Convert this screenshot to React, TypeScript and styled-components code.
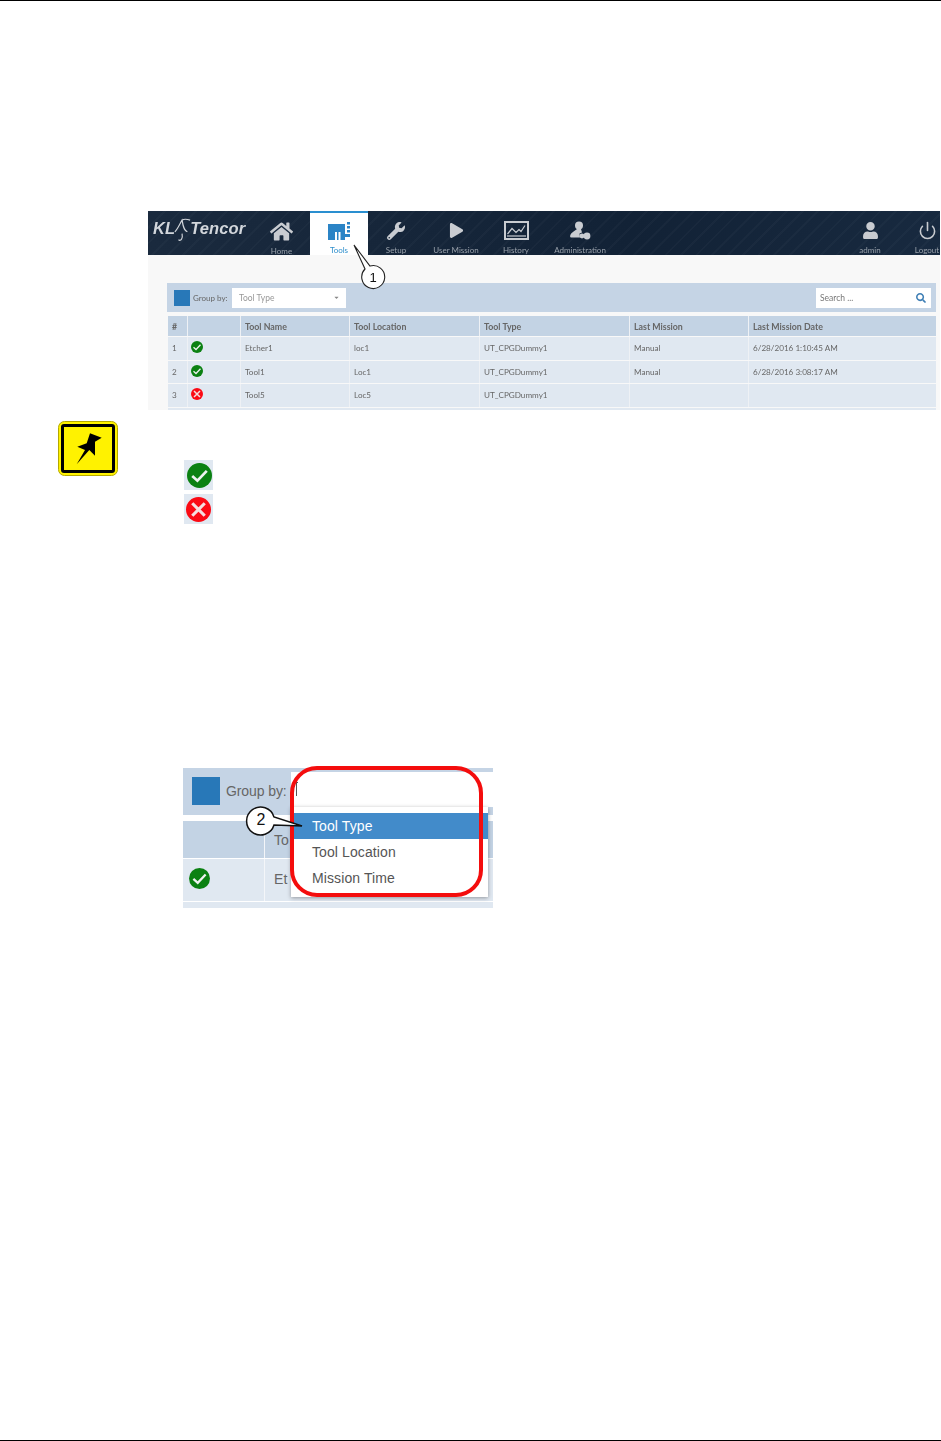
import styled, { createGlobalStyle } from "styled-components";
import { FaHome, FaWrench, FaPlay, FaUser, FaSearch, FaCaretDown } from "react-icons/fa";
import { FiPower } from "react-icons/fi";

const GlobalStyle = createGlobalStyle`
  html, body {
    margin: 0;
    background: #fff;
    overflow: hidden;
  }
`;

const Page = styled.div`
  box-sizing: border-box;
  height: 1441px;
  display: flex;
  flex-direction: column;
  border-top: 1px solid #000;
  border-bottom: 1px solid #000;
  padding-top: 210px;
  overflow: hidden;
`;

const Shot = styled.div`
  position: relative;
  width: 792px;
  height: 199px;
  margin-left: 148px;
  overflow: hidden;
  background: #f8f8f8;
  font-family: Lato, "Liberation Sans", sans-serif;
  filter: blur(0.45px);
`;

const NavBar = styled.div`
  display: flex;
  height: 44px;
  margin-right: -16px;
  color: #c6cad0;
  background-color: #15263a;
  background-image:
    repeating-linear-gradient(135deg, rgba(255, 255, 255, 0.025) 0 2px, transparent 2px 11px),
    linear-gradient(90deg, #1a2a3e, #122236 60%, #182a40);
`;

const Logo = styled.div`
  width: 105px;
  flex: none;
  display: flex;
  align-items: center;
  padding: 0 0 9px 5px;
  box-sizing: border-box;
  font: italic 700 16.5px "Liberation Sans", sans-serif;
  letter-spacing: 0.1px;
  color: #d2d6db;
`;

const Swoosh = styled.svg`
  width: 17px;
  height: 26px;
  margin: 3px -1px 0 -1px;
  flex: none;
`;

const NavItem = styled.div<{ $width: number; $active?: boolean }>`
  width: ${(p) => p.$width}px;
  flex: none;
  box-sizing: border-box;
  display: flex;
  flex-direction: column;
  align-items: center;
  padding-top: ${(p) => (p.$active ? 7 : 9)}px;
  font-size: 8px;
  color: ${(p) => (p.$active ? "#2f8fcc" : "#98a0aa")};
  background: ${(p) => (p.$active ? "#fff" : "transparent")};
  border-top: ${(p) => (p.$active ? "2px solid #2a8fd0" : "none")};
`;

const NavIcon = styled.div`
  height: 22px;
  display: flex;
  align-items: center;
  justify-content: center;
  color: #c9ccd1;
  margin-bottom: 4px;
`;

const NavSpacer = styled.div`
  flex: 1;
`;

const Content = styled.div`
  padding: 28px 4px 0 19px;
`;

const ToolBar = styled.div`
  height: 29px;
  display: flex;
  align-items: center;
  background: #c5d4e5;
  padding: 0 5px 0 7px;
  font-size: 8px;
  color: #666;
  margin-bottom: 4px;
`;

const BlueSquare = styled.div<{ $size: number }>`
  width: ${(p) => p.$size}px;
  height: ${(p) => p.$size}px;
  flex: none;
  background: #2878b8;
`;

const GroupLabel = styled.span`
  width: 39px;
  flex: none;
  margin-left: 3px;
`;

const SelectBox = styled.div`
  width: 114px;
  height: 20px;
  box-sizing: border-box;
  display: flex;
  align-items: center;
  justify-content: space-between;
  padding: 0 6px 0 7px;
  background: #fff;
  color: #999;
  font-size: 8.5px;
`;

const SearchBox = styled(SelectBox)`
  margin-left: auto;
  width: 115px;
  color: #777;
  padding: 0 5px 0 4px;
`;

const Row = styled.div<{ $head?: boolean }>`
  display: grid;
  grid-template-columns: 19px 53px 109px 130px 150px 119px 1fr;
  height: ${(p) => (p.$head ? 20 : 22.5)}px;
  margin-bottom: 1px;
  margin-left: 1px;
  background: ${(p) => (p.$head ? "#c3d3e4" : "#e0e8f1")};
  font-size: ${(p) => (p.$head ? 8.8 : 8.15)}px;
  font-weight: ${(p) => (p.$head ? 700 : 400)};
  color: #666;
`;

const Cell = styled.div`
  display: flex;
  align-items: center;
  padding-left: 4px;
  border-left: 1px solid #eef1f5;
  white-space: nowrap;
  overflow: hidden;

  &:first-child {
    border-left: none;
  }
`;

const IconCell = styled(Cell)`
  padding-left: 3px;
  padding-bottom: 2px;
`;

const Callout = styled.svg<{ $left: number; $top: number }>`
  position: absolute;
  left: ${(p) => p.$left}px;
  top: ${(p) => p.$top}px;
  overflow: visible;
`;

const NoteRow = styled.div`
  display: flex;
  margin: 11px 0 0 58px;
`;

const StatusList = styled.div`
  display: flex;
  flex-direction: column;
  gap: 4px;
  margin: 39px 0 0 66px;
`;

const StatusTile = styled.div<{ $shift: number }>`
  width: 29px;
  height: 30px;
  display: flex;
  align-items: center;
  justify-content: center;
  padding-left: ${(p) => p.$shift}px;
  box-sizing: border-box;
  background: #e0e8f1;
`;

const Crop = styled.div`
  position: relative;
  width: 310px;
  height: 139px;
  margin: 244px 0 0 183px;
  font-family: "Liberation Sans", Arial, sans-serif;
  font-size: 14px;
  letter-spacing: 0.1px;
  color: #666;
`;

const CropBar = styled.div`
  height: 47px;
  box-sizing: border-box;
  display: flex;
  align-items: center;
  padding: 0 0 1px 9px;
  background: #c5d4e5;
  margin-bottom: 6px;
`;

const CropLabel = styled.span`
  margin: 0 0 1px 6px;
  letter-spacing: -0.1px;
`;

const CropInput = styled.div`
  position: absolute;
  left: 108px;
  right: 0;
  top: 4px;
  height: 35px;
  background: #fff;
`;

const Caret = styled.div`
  position: absolute;
  left: 5px;
  top: 10px;
  width: 2px;
  height: 14px;
  border-left: 1px solid #555;
  border-top: 1px solid #555;
  box-sizing: border-box;
`;

const CropRow = styled.div<{ $head?: boolean; $height: number }>`
  display: grid;
  grid-template-columns: 81px 1fr;
  height: ${(p) => p.$height}px;
  margin-bottom: 1px;
  background: ${(p) => (p.$head ? "#c3d3e4" : "#e0e8f1")};
`;

const CropCell = styled.div<{ $lift?: boolean }>`
  display: flex;
  align-items: center;
  padding: 0 0 ${(p) => (p.$lift ? 3 : 0)}px 9px;
  border-left: 1px solid #f4f6f9;

  &:first-child {
    border-left: none;
    padding-left: 6px;
  }
`;

const Dropdown = styled.div`
  position: absolute;
  left: 108px;
  top: 39px;
  width: 197px;
  height: 90px;
  box-sizing: border-box;
  padding-top: 6px;
  background: #fff;
  box-shadow: 0 1px 4px rgba(0, 0, 0, 0.35);
`;

const Option = styled.div<{ $selected?: boolean }>`
  height: 26px;
  display: flex;
  align-items: center;
  padding-left: 21px;
  color: ${(p) => (p.$selected ? "#fff" : "#555")};
  background: ${(p) => (p.$selected ? "#428bca" : "transparent")};
`;

const Highlight = styled.div`
  position: absolute;
  left: 107px;
  top: -2px;
  width: 193px;
  height: 131px;
  box-sizing: border-box;
  border: 4px solid #f40d0d;
  border-radius: 27px;
`;

function StatusIcon({ ok, size }: { ok: boolean; size: number }) {
  return (
    <svg width={size} height={size} viewBox="0 0 24 24">
      <circle cx="12" cy="12" r="12" fill={ok ? "#0b8112" : "#fb0a14"} />
      {ok ? (
        <path d="M5 12.5 10 17 19 7.5" fill="none" stroke="#eef2f0" strokeWidth="2.6" />
      ) : (
        <path d="M6 6 18 18M18 6 6 18" fill="none" stroke="#f4dede" strokeWidth="3" />
      )}
    </svg>
  );
}

function ToolsIcon() {
  return (
    <svg width="22" height="18" viewBox="0 0 22 18" fill="#2b84c6">
      <path d="M0 2h17v16H0z" />
      <path d="M7 10h2v8H7zM10.500 10h2v8h-2z" fill="#fff" />
      <rect x="19" y="0" width="3" height="2.5" />
      <rect x="19" y="4" width="3" height="2.5" />
      <rect x="19" y="8" width="3" height="2.5" />
      <path d="M17 12h5v3h-5z" />
    </svg>
  );
}

function HistoryIcon() {
  return (
    <svg width="25" height="19" viewBox="0 0 25 19" fill="none" stroke="#c9ccd1">
      <rect x="1" y="1" width="23" height="17" strokeWidth="2" />
      <path d="M3.5 13 8 7.5l4 4 3-3 2 2 4-6" strokeWidth="1.2" />
      <path d="M3 15h19" strokeWidth="1.2" />
    </svg>
  );
}

function AdminIcon() {
  return (
    <svg width="21" height="19" viewBox="0 0 21 19" fill="#c9ccd1">
      <circle cx="9" cy="4.5" r="4" />
      <path d="M7 8h4l1 3.5-2.500 1 .5 4H1c-.8 0-1-1-.8-2C1 11.500 4.500 10 7 8z" />
      <circle cx="12" cy="15" r="2.4" />
      <circle cx="17" cy="15" r="3.4" />
    </svg>
  );
}

function PinNote() {
  return (
    <svg width="60" height="55" viewBox="0 0 60 55">
      <rect x="0.5" y="0.5" width="59" height="54" rx="6" fill="#fff200" stroke="#b5a900" />
      <rect x="4.5" y="4.5" width="51" height="46" rx="1.5" fill="#fff200" stroke="#000" strokeWidth="3" />
      <path
        d="M18.7 43.3 27 29l-7.700-3.300 9.400-3.400L32 12.300l11.700 4.400-6.700 4v14L31.300 29z"
        fill="#000"
      />
    </svg>
  );
}

function LogoSwoosh() {
  return (
    <Swoosh viewBox="0 0 19 26" fill="none" stroke="#d2d6db" strokeWidth="1.3">
      <path d="M1 15C4 12 6 7 9 2c1 6 2 12 6 13" />
      <path d="M5 24c3 2 5-2 4-7" />
      <path d="M9 2c3-2 6-1 9 0" />
    </Swoosh>
  );
}

const navLeft = [
  { label: "Home", width: 57, icon: <FaHome size={23} /> },
  { label: "Tools", width: 58, icon: <ToolsIcon />, active: true },
  { label: "Setup", width: 56, icon: <FaWrench size={18} /> },
  { label: "User Mission", width: 64, icon: <FaPlay size={15} /> },
  { label: "History", width: 56, icon: <HistoryIcon /> },
  { label: "Administration", width: 72, icon: <AdminIcon /> },
];

const rows = [
  { id: "1", ok: true, name: "Etcher1", location: "loc1", mission: "Manual", date: "6/28/2016 1:10:45 AM" },
  { id: "2", ok: true, name: "Tool1", location: "Loc1", mission: "Manual", date: "6/28/2016 3:08:17 AM" },
  { id: "3", ok: false, name: "Tool5", location: "Loc5", mission: "", date: "" },
];

function App() {
  return (
    <>
      <GlobalStyle />
      <Page>
        <Shot>
          <NavBar>
            <Logo>
              KL
              <LogoSwoosh />
              Tencor
            </Logo>
            {navLeft.map((item) => (
              <NavItem key={item.label} $width={item.width} $active={item.active}>
                <NavIcon>{item.icon}</NavIcon>
                {item.label}
              </NavItem>
            ))}
            <NavSpacer />
            <NavItem $width={56}>
              <NavIcon>
                <FaUser size={17} />
              </NavIcon>
              admin
            </NavItem>
            <NavItem $width={58}>
              <NavIcon>
                <FiPower size={19} />
              </NavIcon>
              Logout
            </NavItem>
          </NavBar>
          <Content>
            <ToolBar>
              <BlueSquare $size={16} />
              <GroupLabel>Group by:</GroupLabel>
              <SelectBox>
                Tool Type
                <FaCaretDown size={7} color="#888" />
              </SelectBox>
              <SearchBox>
                Search ...
                <FaSearch size={10} color="#3f7fb5" />
              </SearchBox>
            </ToolBar>
            <Row $head>
              <Cell>#</Cell>
              <Cell />
              <Cell>Tool Name</Cell>
              <Cell>Tool Location</Cell>
              <Cell>Tool Type</Cell>
              <Cell>Last Mission</Cell>
              <Cell>Last Mission Date</Cell>
            </Row>
            {rows.map((row) => (
              <Row key={row.id}>
                <Cell>{row.id}</Cell>
                <IconCell>
                  <StatusIcon ok={row.ok} size={12} />
                </IconCell>
                <Cell>{row.name}</Cell>
                <Cell>{row.location}</Cell>
                <Cell>UT_CPGDummy1</Cell>
                <Cell>{row.mission}</Cell>
                <Cell>{row.date}</Cell>
              </Row>
            ))}
            <Row />
          </Content>
          <Callout $left={205} $top={34} width="34" height="44" viewBox="0 0 34 44">
            <path
              d="M1 0 12 24A11.500 11.500 0 1 0 17 21Z"
              fill="#fff"
              stroke="#222"
              strokeWidth="1.100"
            />
            <text x="20" y="37" fontSize="13" fontFamily="Liberation Sans, sans-serif" textAnchor="middle" fill="#111">
              1
            </text>
          </Callout>
        </Shot>

        <NoteRow>
          <PinNote />
          <StatusList>
            <StatusTile $shift={2}>
              <StatusIcon ok size={25} />
            </StatusTile>
            <StatusTile $shift={0}>
              <StatusIcon ok={false} size={25} />
            </StatusTile>
          </StatusList>
        </NoteRow>

        <Crop>
          <CropBar>
            <BlueSquare $size={28} />
            <CropLabel>Group by:</CropLabel>
          </CropBar>
          <CropInput>
            <Caret />
          </CropInput>
          <CropRow $head $height={37}>
            <CropCell />
            <CropCell>To</CropCell>
          </CropRow>
          <CropRow $height={42}>
            <CropCell $lift>
              <StatusIcon ok size={21} />
            </CropCell>
            <CropCell $lift>Et</CropCell>
          </CropRow>
          <CropRow $height={6} />
          <Dropdown>
            <Option $selected>Tool Type</Option>
            <Option>Tool Location</Option>
            <Option>Mission Time</Option>
          </Dropdown>
          <Highlight />
          <Callout $left={64} $top={37} width="56" height="30" viewBox="0 0 56 30">
            <path
              d="M55 21 27 12A14 14 0 1 0 27 20Z"
              fill="#fff"
              stroke="#111"
              strokeWidth="1.500"
            />
            <text x="14" y="20" fontSize="16" fontFamily="Liberation Sans, sans-serif" textAnchor="middle" fill="#111">
              2
            </text>
          </Callout>
        </Crop>
      </Page>
    </>
  );
}

export default App;
